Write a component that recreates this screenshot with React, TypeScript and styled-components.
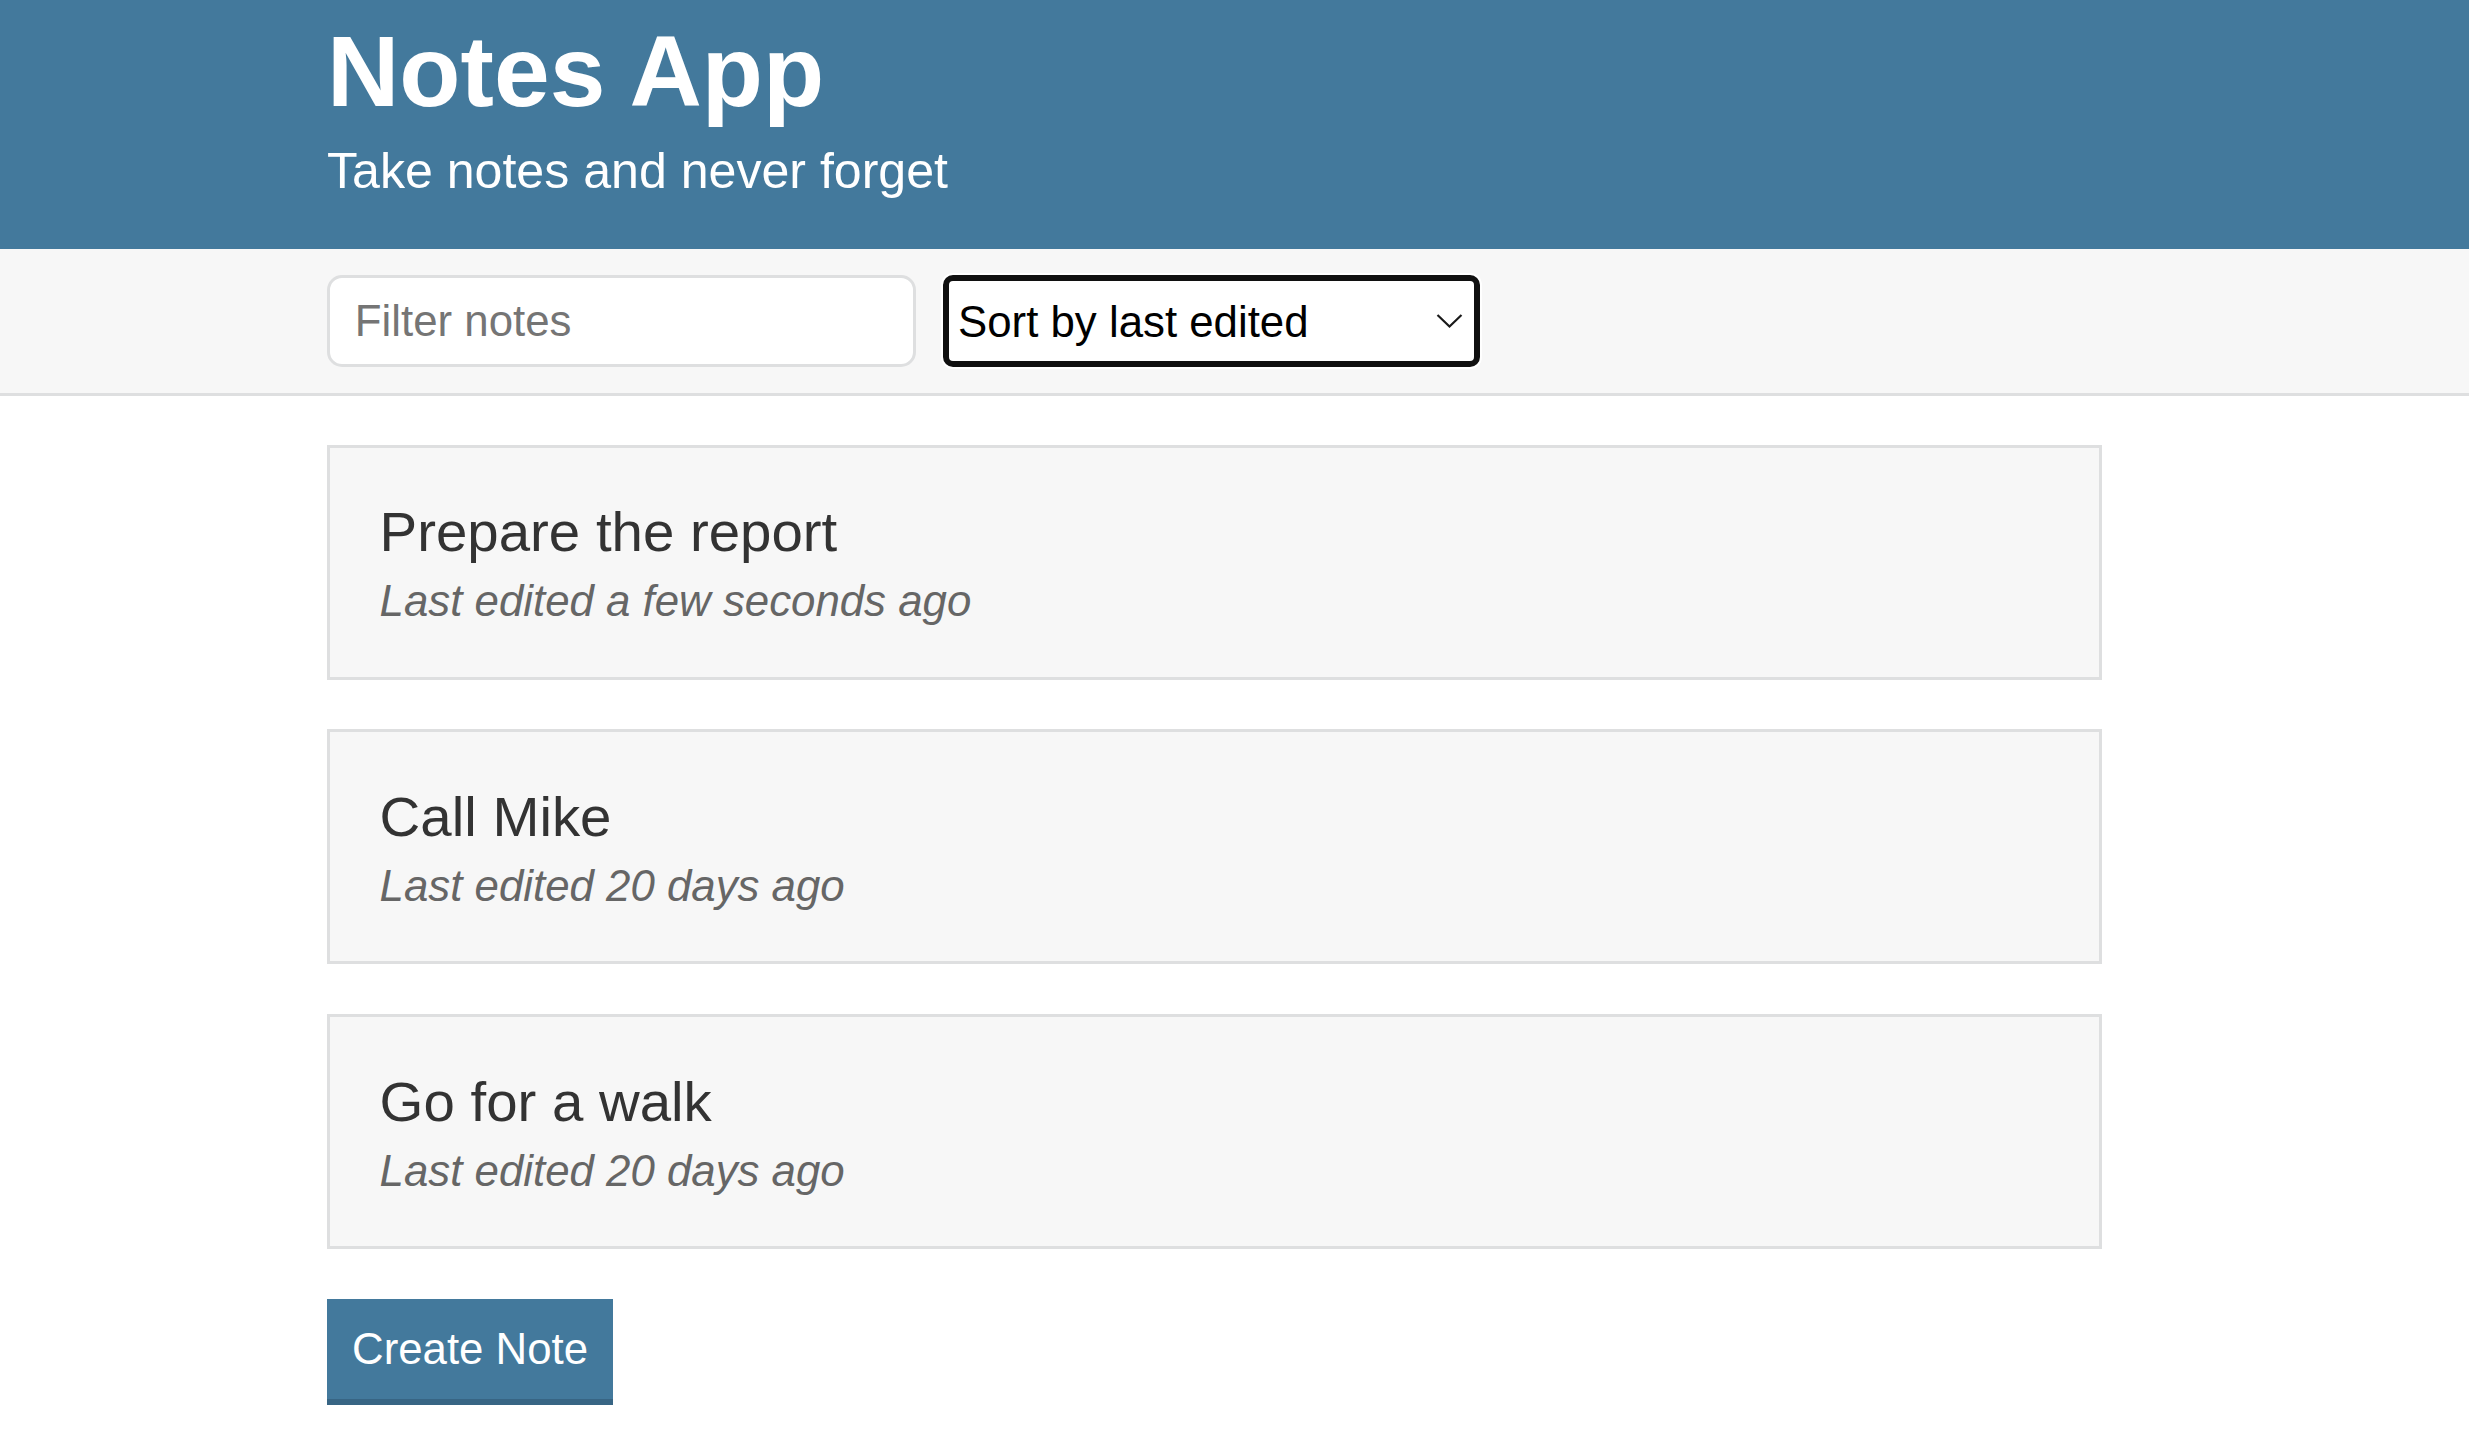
import { useState } from "react";
import styled, { createGlobalStyle } from "styled-components";

const GlobalStyle = createGlobalStyle`
    * {
        box-sizing: border-box;
    }
    body {
        margin: 0;
        background: #ffffff;
        color: #333333;
        font-family: "Liberation Sans", Arial, Helvetica, sans-serif;
    }
`;

const Container = styled.div`
    width: 1775px;
    margin-left: 327px;
`;

const Header = styled.header`
    background: #43799c;
    color: #ffffff;
    padding: 22px 0 53px;
`;

const Title = styled.h1`
    margin: 0 0 25px;
    font-size: 100.2px;
    line-height: 99px;
    font-weight: 700;
`;

const Subtitle = styled.h2`
    margin: 0;
    font-size: 50.1px;
    line-height: 50px;
    font-weight: 300;
`;

const Actions = styled.div`
    background: #f7f7f7;
    border-bottom: 3px solid #dedfe0;
    padding: 26px 0 26px;
`;

const ActionsRow = styled(Container)`
    display: flex;
    align-items: center;
    gap: 27px;
`;

const FilterInput = styled.input`
    width: 589px;
    height: 92px;
    padding: 0 24.8px;
    border: 3px solid #dedfe0;
    border-radius: 15px;
    background: #ffffff;
    font-family: inherit;
    font-size: 43.8px;
    font-weight: 300;
    color: #333333;
    outline: none;
    &::placeholder {
        color: #757575;
    }
`;

const SelectWrap = styled.div`
    position: relative;
    width: 537px;
    height: 92px;
`;

const Dropdown = styled.select<{ $focused: boolean }>`
    appearance: none;
    width: 100%;
    height: 100%;
    padding: 0 50px 0 9px;
    border: 6px solid ${(p) => (p.$focused ? "#101010" : "#dedfe0")};
    border-radius: 10px;
    box-shadow: 0 0 0 2px #ffffff;
    background: #ffffff;
    font-family: inherit;
    font-size: 43.8px;
    color: #000000;
    outline: none;
`;

const Chevron = styled.svg`
    position: absolute;
    right: 17px;
    top: 50%;
    transform: translateY(-50%);
    width: 27px;
    height: 15px;
    pointer-events: none;
`;

const NoteList = styled(Container)`
    padding-top: 48.5px;
`;

const NoteItem = styled.a`
    display: block;
    margin-bottom: 49.6px;
    padding: 49.6px;
    background: #f7f7f7;
    border: 3px solid #dedfe0;
    color: #333333;
    text-decoration: none;
    cursor: pointer;
`;

const NoteTitle = styled.p`
    margin: 0 0 8px;
    font-size: 56.4px;
    line-height: 70px;
`;

const NoteMeta = styled.p`
    margin: 0;
    font-size: 43.8px;
    line-height: 52px;
    font-style: italic;
    font-weight: 300;
    color: #666666;
`;

const CreateButton = styled.button`
    display: block;
    margin-top: 0;
    padding: 25px 25px;
    border: none;
    border-bottom: 6px solid #386584;
    background: #43799c;
    color: #ffffff;
    font-family: inherit;
    font-size: 43.8px;
    line-height: 50px;
    font-weight: 300;
    cursor: pointer;
`;

interface Note {
    id: string;
    title: string;
    edited: string;
}

const notes: Note[] = [
    { id: "1", title: "Prepare the report", edited: "a few seconds ago" },
    { id: "2", title: "Call Mike", edited: "20 days ago" },
    { id: "3", title: "Go for a walk", edited: "20 days ago" },
];

const App = () => {
    const [filter, setFilter] = useState("");
    const [sortBy, setSortBy] = useState("byEdited");

    const visible = notes.filter((n) =>
        n.title.toLowerCase().includes(filter.toLowerCase()),
    );

    return (
        <>
            <GlobalStyle />
            <Header>
                <Container>
                    <Title>Notes App</Title>
                    <Subtitle>Take notes and never forget</Subtitle>
                </Container>
            </Header>
            <Actions>
                <ActionsRow>
                    <FilterInput
                        type="text"
                        placeholder="Filter notes"
                        value={filter}
                        onChange={(e) => setFilter(e.target.value)}
                    />
                    <SelectWrap>
                        <Dropdown
                            $focused
                            value={sortBy}
                            onChange={(e) => setSortBy(e.target.value)}
                        >
                            <option value="byEdited">Sort by last edited</option>
                            <option value="byCreated">Sort by recently created</option>
                            <option value="alphabetical">Sort alphabetically</option>
                        </Dropdown>
                        <Chevron viewBox="0 0 27 15" fill="none">
                            <path
                                d="M1.5 1.5 L13.5 13 L25.5 1.5"
                                stroke="#1a1a1a"
                                strokeWidth="2.2"
                            />
                        </Chevron>
                    </SelectWrap>
                </ActionsRow>
            </Actions>
            <NoteList>
                {visible.map((note) => (
                    <NoteItem key={note.id} href={`#/edit/${note.id}`}>
                        <NoteTitle>{note.title}</NoteTitle>
                        <NoteMeta>Last edited {note.edited}</NoteMeta>
                    </NoteItem>
                ))}
                <CreateButton>Create Note</CreateButton>
            </NoteList>
        </>
    );
};

export default App;
